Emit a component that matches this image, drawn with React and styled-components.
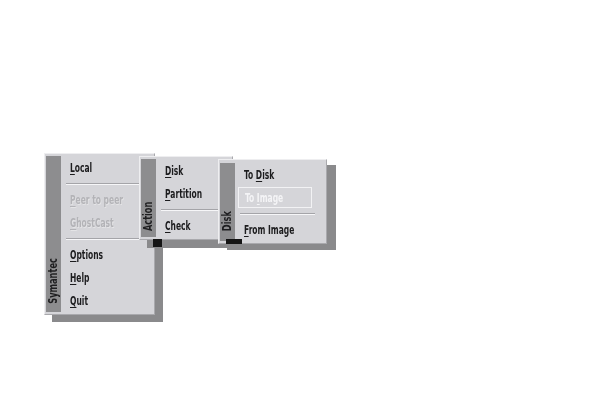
import React from "react";
import styled, { createGlobalStyle } from "styled-components";

const GlobalStyle = createGlobalStyle`
  html, body {
    margin: 0;
    padding: 0;
    background: #ffffff;
  }
  body {
    font-family: "DejaVu Sans Condensed", "DejaVu Sans", sans-serif;
  }
`;

const Desktop = styled.div`
  position: relative;
  width: 600px;
  height: 400px;
  overflow: hidden;
  background: #ffffff;
`;

// each popup menu sits on the desktop at its own spot
const Menu = styled.div`
  position: absolute;
  left: ${(p) => p.x}px;
  top: ${(p) => p.y}px;
  width: ${(p) => p.w}px;
  box-sizing: border-box;
  display: flex;
  gap: 1px;
  padding: ${(p) => p.pad || 2}px 1px 2px 1px;
  background: #d5d5d9;
  border: 1px solid #eeeef0;
  border-right-color: #a9a9ad;
  border-bottom-color: #a9a9ad;
  box-shadow: ${(p) => p.sx}px ${(p) => p.sy}px 0 #8a8a8c;

  &::after {
    content: "";
    position: absolute;
    top: calc(100% + ${(p) => p.bt || 0}px);
    left: ${(p) => p.bx}px;
    width: ${(p) => p.bw}px;
    height: ${(p) => p.bh}px;
    background: #141414;
  }
`;

const SideBar = styled.div`
  width: 15px;
  flex: none;
  background: #8d8d8f;
  display: flex;
  flex-direction: column;
  justify-content: flex-end;
  align-items: center;
  padding-bottom: ${(p) => p.lift}px;
  box-sizing: border-box;
`;

const SideLabel = styled.span`
  writing-mode: vertical-rl;
  transform: rotate(180deg) scaleY(0.76);
  font-size: 12px;
  font-weight: bold;
  color: #1e1e20;
  line-height: 15px;
`;

const Items = styled.div`
  flex: 1;
  display: flex;
  flex-direction: column;
`;

const Item = styled.div`
  box-sizing: border-box;
  display: flex;
  align-items: center;
  padding-left: ${(p) => (p.active ? 6 : 8)}px;
  margin: ${(p) => (p.active ? "1px 13px 1px 2px" : "0")};
  height: ${(p) => (p.active ? 21 : 23)}px;
  border: ${(p) => (p.active ? "1px solid #f2f2f4" : "none")};
  font-size: 12px;
  font-weight: bold;
  white-space: nowrap;
  color: ${(p) => (p.disabled ? "#b3b3b7" : p.active ? "#f4f4f6" : "#1c1c1e")};
  text-shadow: ${(p) => (p.disabled ? "1px 1px 0 #e4e4e6" : "none")};
`;

const Text = styled.span`
  display: inline-block;
  transform: scaleX(0.7);
  transform-origin: left center;

  u {
    text-decoration: underline;
    text-decoration-thickness: 1px;
    text-underline-offset: 2px;
  }
`;

const Separator = styled.div`
  height: 9px;
  display: flex;
  flex-direction: column;
  justify-content: center;
  margin: 0 ${(p) => p.right || 3}px 0 4px;

  &::before {
    content: "";
    display: block;
    height: 1px;
    background: #a4a4a8;
  }
  &::after {
    content: "";
    display: block;
    height: 1px;
    background: #f6f6f8;
  }
`;

const Label = ({ text, at }) => (
  <Text>
    {text.slice(0, at)}
    <u>{text[at]}</u>
    {text.slice(at + 1)}
  </Text>
);

export default function App() {
  return (
    <>
      <GlobalStyle />
      <Desktop>
        <Menu x={44} y={153} w={111} sx={8} sy={7} bx={0} bw={0} bh={0}>
          <SideBar lift={1}>
            <SideLabel>Symantec</SideLabel>
          </SideBar>
          <Items>
            <Item>
              <Label text="Local" at={0} />
            </Item>
            <Separator />
            <Item disabled>
              <Label text="Peer to peer" at={0} />
            </Item>
            <Item disabled>
              <Label text="GhostCast" at={0} />
            </Item>
            <Separator />
            <Item>
              <Label text="Options" at={0} />
            </Item>
            <Item>
              <Label text="Help" at={0} />
            </Item>
            <Item>
              <Label text="Quit" at={0} />
            </Item>
          </Items>
        </Menu>

        <Menu x={139} y={156} w={94} sx={8} sy={8} bx={13} bw={9} bh={8}>
          <SideBar lift={1}>
            <SideLabel>Action</SideLabel>
          </SideBar>
          <Items>
            <Item>
              <Label text="Disk" at={0} />
            </Item>
            <Item>
              <Label text="Partition" at={0} />
            </Item>
            <Separator />
            <Item>
              <Label text="Check" at={0} />
            </Item>
          </Items>
        </Menu>

        <Menu x={218} y={159} w={109} pad={3} sx={9} sy={6} bx={7} bw={16} bh={5} bt={-4}>
          <SideBar lift={7}>
            <SideLabel>Disk</SideLabel>
          </SideBar>
          <Items>
            <Item>
              <Label text="To Disk" at={3} />
            </Item>
            <Item active>
              <Label text="To Image" at={3} />
            </Item>
            <Separator right={10} />
            <Item>
              <Label text="From Image" at={0} />
            </Item>
          </Items>
        </Menu>
      </Desktop>
    </>
  );
}
